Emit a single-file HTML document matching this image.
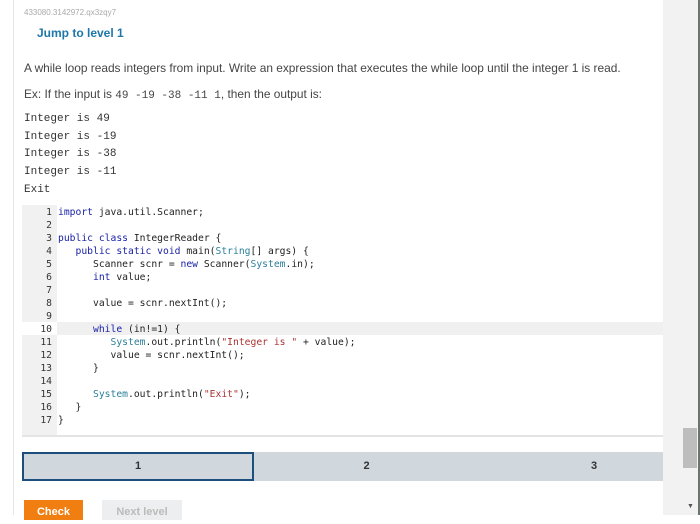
<!DOCTYPE html>
<html><head><style>
body{margin:0;width:700px;height:515px;overflow:hidden;background:#fff;font-family:"Liberation Sans",sans-serif;position:relative}
.abs{position:absolute}
.panel{left:13px;top:0;width:650px;height:515px;background:#fff;border-left:1px solid #e6e6e6;border-right:1px solid #e6e6e6}
.code{left:22px;top:205px;width:641px;height:230px;background:#fff;border-bottom:2px solid #e4e4e4;font-family:"DejaVu Sans Mono","Liberation Mono",monospace;font-size:9.7px;color:#222}
.gut{left:0;top:0;width:35px;height:230px;background:#f1f1f1}
.ln{position:absolute;left:0;width:30px;text-align:right;color:#333}
.tx{position:absolute;left:36px;white-space:pre}
.kw{color:#1a22a8}.ty{color:#2a7f9a}.st{color:#a33}
</style></head><body>
<div class="abs panel"></div>
<div class="abs" style="left:663px;top:0;width:35px;height:515px;background:#f2f2f2"></div>
<div class="abs" style="left:683px;top:428px;width:14px;height:40px;background:#bdbdbd"></div>
<div class="abs" style="left:698px;top:0;width:2px;height:515px;background:#6b7570"></div>
<div class="abs" style="left:687px;top:503px;font-size:7px;color:#555">▼</div>
<div class="abs" style="left:24px;top:8px;font-size:8px;color:#aaa">433080.3142972.qx3zqy7</div>
<div class="abs" style="left:37px;top:26px;font-size:12px;font-weight:bold;color:#1f77a8">Jump to level 1</div>
<div class="abs" style="left:24px;top:61px;font-size:11.9px;color:#444">A while loop reads integers from input. Write an expression that executes the while loop until the integer 1 is read.</div>
<div class="abs" style="left:24px;top:87px;font-size:11.9px;color:#444">Ex: If the input is <span style="font-family:'Liberation Mono',monospace;font-size:11px">49 -19 -38 -11 1</span>, then the output is:</div>
<div class="abs" style="left:24px;top:111px;font-family:'Liberation Mono',monospace;font-size:11px;line-height:17.7px;color:#333;white-space:pre">Integer is 49
Integer is -19
Integer is -38
Integer is -11
Exit</div>
<div class="abs code">
<div class="abs gut"></div>
<div class="abs" style="left:0;top:117px;width:35px;height:13px;background:#fff"></div>
<div class="abs" style="left:35px;top:117px;width:606px;height:13px;background:#f0f0f0"></div>
<div class="ln" style="top:2px">1</div><div class="tx" style="top:2px"><span class="kw">import</span> java.util.Scanner;</div>
<div class="ln" style="top:15px">2</div>
<div class="ln" style="top:28px">3</div><div class="tx" style="top:28px"><span class="kw">public class</span> IntegerReader {</div>
<div class="ln" style="top:41px">4</div><div class="tx" style="top:41px">   <span class="kw">public static void</span> main(<span class="ty">String</span>[] args) {</div>
<div class="ln" style="top:54px">5</div><div class="tx" style="top:54px">      Scanner scnr = <span class="kw">new</span> Scanner(<span class="ty">System</span>.in);</div>
<div class="ln" style="top:67px">6</div><div class="tx" style="top:67px">      <span class="kw">int</span> value;</div>
<div class="ln" style="top:80px">7</div>
<div class="ln" style="top:93px">8</div><div class="tx" style="top:93px">      value = scnr.nextInt();</div>
<div class="ln" style="top:106px">9</div>
<div class="ln" style="top:119px">10</div><div class="tx" style="top:119px">      <span class="kw">while</span> (in!=1) {</div>
<div class="ln" style="top:132px">11</div><div class="tx" style="top:132px">         <span class="ty">System</span>.out.println(<span class="st">"Integer is "</span> + value);</div>
<div class="ln" style="top:145px">12</div><div class="tx" style="top:145px">         value = scnr.nextInt();</div>
<div class="ln" style="top:158px">13</div><div class="tx" style="top:158px">      }</div>
<div class="ln" style="top:171px">14</div>
<div class="ln" style="top:184px">15</div><div class="tx" style="top:184px">      <span class="ty">System</span>.out.println(<span class="st">"Exit"</span>);</div>
<div class="ln" style="top:197px">16</div><div class="tx" style="top:197px">   }</div>
<div class="ln" style="top:210px">17</div><div class="tx" style="top:210px">}</div>
</div>
<div class="abs" style="left:22px;top:452px;width:641px;height:29px;background:#d0d7dd"></div>
<div class="abs" style="left:22px;top:452px;width:228px;height:25px;border:2px solid #1d4f7c;text-align:center;line-height:25px;font-size:11px;font-weight:bold;color:#333">1</div>
<div class="abs" style="left:254px;top:452px;width:225px;height:29px;text-align:center;line-height:29px;font-size:11px;font-weight:bold;color:#333">2</div>
<div class="abs" style="left:525px;top:452px;width:138px;height:29px;text-align:center;line-height:29px;font-size:11px;font-weight:bold;color:#333">3</div>
<div class="abs" style="left:24px;top:500px;width:59px;height:20px;background:#f07e10;color:#fff;font-size:11px;font-weight:bold;text-align:center;line-height:24px">Check</div>
<div class="abs" style="left:102px;top:500px;width:80px;height:20px;background:#eceeef;color:#bbb;font-size:11px;font-weight:bold;text-align:center;line-height:24px">Next level</div>
</body></html>
